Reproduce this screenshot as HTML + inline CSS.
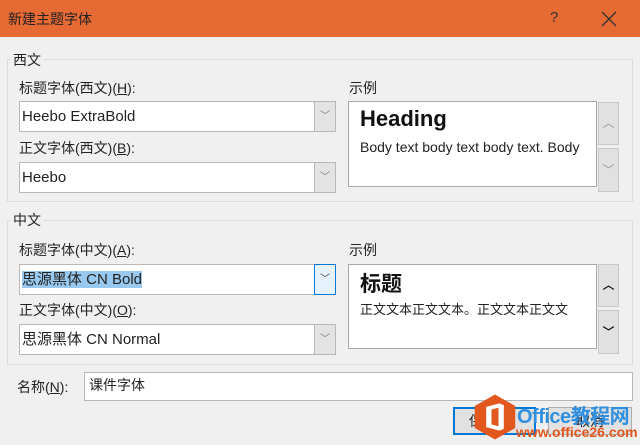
<!DOCTYPE html><html><head><meta charset="utf-8"><style>
*{box-sizing:border-box;margin:0;padding:0}
body{width:640px;height:445px;overflow:hidden;background:#f0f0f0;font-family:"Liberation Sans","Noto Sans CJK SC",sans-serif;font-size:14px;color:#222;position:relative}
.a{position:absolute}
.bar{left:0;top:0;width:640px;height:37px;background:#e66a34}
.grp{border:1px solid #dcdcdc}
.leg{background:#f0f0f0;padding:0 3px;font-size:14px}
.cb{background:#fff;border:1px solid #b8b8b8;height:31px;line-height:29px;padding-left:2px;font-size:15px}
.dd{position:absolute;right:-1px;top:-1px;width:22px;height:31px;background:#e3e3e3;border:1px solid #b8b8b8;text-align:center;font-size:10px;color:#777;line-height:29px}
.pv{background:#fff;border:1px solid #a8a8a8}
.sp{background:#e1e1e1;border:1px solid #c8c8c8;text-align:center;color:#999;font-size:12px}
u{text-decoration:underline}
</style></head><body>
<div class="a bar"></div>
<div class="a" style="left:8px;top:9px;font-size:14px;color:#222">新建主题字体</div>
<div class="a" style="left:550px;top:9px;font-size:15px;color:#333">?</div>
<svg class="a" style="left:601px;top:11px" width="16" height="16" viewBox="0 0 16 16"><path d="M1 1L15 15M15 1L1 15" stroke="#333" stroke-width="1.3"/></svg>

<div class="a grp" style="left:7px;top:59px;width:626px;height:143px"></div>
<div class="a leg" style="left:10px;top:50px">西文</div>
<div class="a" style="left:19px;top:78px">标题字体(西文)(<u>H</u>):</div>
<div class="a cb" style="left:19px;top:101px;width:317px">Heebo ExtraBold<div class="dd">﹀</div></div>
<div class="a" style="left:19px;top:138px">正文字体(西文)(<u>B</u>):</div>
<div class="a cb" style="left:19px;top:162px;width:317px">Heebo<div class="dd">﹀</div></div>
<div class="a" style="left:349px;top:78px">示例</div>
<div class="a pv" style="left:348px;top:101px;width:249px;height:86px;overflow:hidden">
<div style="position:absolute;left:11px;top:4px;font-size:22px;font-weight:bold;color:#111">Heading</div>
<div style="position:absolute;left:11px;top:37px;font-size:14px;white-space:nowrap;color:#222">Body text body text body text. Body</div></div>
<div class="a sp" style="left:598px;top:102px;width:21px;height:43px;line-height:41px">︿</div>
<div class="a sp" style="left:598px;top:148px;width:21px;height:44px;line-height:42px">﹀</div>

<div class="a grp" style="left:7px;top:220px;width:626px;height:145px"></div>
<div class="a leg" style="left:10px;top:210px">中文</div>
<div class="a" style="left:19px;top:240px">标题字体(中文)(<u>A</u>):</div>
<div class="a cb" style="left:19px;top:264px;width:317px"><span style="background:#99c9ef">思源黑体 CN Bold</span><div class="dd" style="background:#e5f1fb;border-color:#0078d7;color:#333">﹀</div></div>
<div class="a" style="left:19px;top:300px">正文字体(中文)(<u>O</u>):</div>
<div class="a cb" style="left:19px;top:324px;width:317px">思源黑体 CN Normal<div class="dd">﹀</div></div>
<div class="a" style="left:349px;top:240px">示例</div>
<div class="a pv" style="left:348px;top:264px;width:249px;height:85px;overflow:hidden">
<div style="position:absolute;left:11px;top:3px;font-size:21px;font-weight:bold;color:#111">标题</div>
<div style="position:absolute;left:11px;top:34px;font-size:13px;white-space:nowrap;color:#222">正文文本正文文本。正文文本正文文</div></div>
<div class="a sp" style="left:598px;top:264px;width:21px;height:43px;line-height:41px;color:#222;font-weight:bold">︿</div>
<div class="a sp" style="left:598px;top:310px;width:21px;height:44px;line-height:42px;color:#222;font-weight:bold">﹀</div>

<div class="a" style="left:17px;top:377px">名称(<u>N</u>):</div>
<div class="a" style="left:84px;top:372px;width:549px;height:29px;background:#fff;border:1px solid #b8b8b8;padding:2px 4px">课件字体</div>
<div class="a" style="left:453px;top:407px;width:83px;height:28px;background:#e1e1e1;border:2px solid #0078d7;line-height:24px;padding-left:14px">保存(S)</div>
<div class="a" style="left:548px;top:407px;width:84px;height:28px;background:#e1e1e1;border:1px solid #adadad;line-height:26px;text-align:center">取消</div>
<svg class="a" style="left:473px;top:393px" width="44" height="48" viewBox="0 0 50 53"><polygon points="25,1 48,14 48,39 25,52 2,39 2,14" fill="#e2571e"/><path d="M15 15 L30 11 L35 13 L35 40 L30 42 L15 38 Z" fill="#fff"/><path d="M21 18 L29 16 L29 37 L21 35Z" fill="#e2571e"/></svg>
<div class="a" style="left:517px;top:400px;font-size:20px;font-weight:bold;color:#2f8fe0;white-space:nowrap;letter-spacing:-0.5px">Office教程网</div>
<div class="a" style="left:516px;top:424px;font-size:14px;font-weight:bold;color:#e2571e;white-space:nowrap">www.office26.com</div>
</body></html>
